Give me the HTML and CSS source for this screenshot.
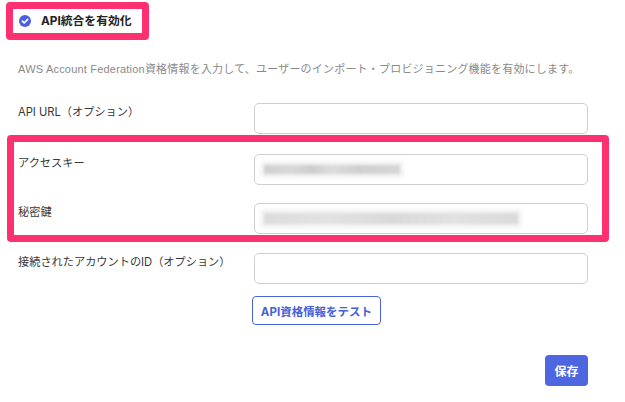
FILE: index.html
```html
<!DOCTYPE html>
<html lang="ja">
<head>
<meta charset="utf-8">
<link rel="stylesheet" href="styles.css">
</head>
<body>
<div class="page">
  <div class="enable">
    <svg class="check" width="12" height="12" viewBox="0 0 12 12"><circle cx="6" cy="6" r="6" fill="#4b5fe0"/><path d="M3.4 6.1 L5.2 7.9 L8.7 4.3" fill="none" stroke="#fff" stroke-width="1.7" stroke-linecap="round" stroke-linejoin="round"/></svg>
    <span class="enable-text">API統合を有効化</span>
  </div>
  <p class="desc">AWS Account Federation資格情報を入力して、ユーザーのインポート・プロビジョニング機能を有効にします。</p>

  <div class="row row-first">
    <div class="label">API URL（オプション）</div>
    <div class="field"></div>
  </div>

  <div class="highlight">
    <div class="row row-in">
      <div class="label">アクセスキー</div>
      <div class="field"><span class="mask mask-short"></span></div>
    </div>
    <div class="row row-in row-gap">
      <div class="label">秘密鍵</div>
      <div class="field"><span class="mask mask-long"></span></div>
    </div>
  </div>

  <div class="row row-account">
    <div class="label">接続されたアカウントのID（オプション）</div>
    <div class="field"></div>
  </div>

  <div class="test-wrap"><button class="btn-test">API資格情報をテスト</button></div>
  <div class="save-wrap"><button class="btn-save">保存</button></div>
</div>
</body>
</html>
```

FILE: styles.css
```css
html, body {
  margin: 0;
  padding: 0;
  background: #ffffff;
}
body {
  font-family: "Inter", "Noto Sans CJK JP", sans-serif;
  color: #333333;
}
.page {
  width: 625px;
  height: 402px;
  overflow: hidden;
}
.enable {
  margin: 2px 0 0 6px;
  width: 123px;
  height: 24px;
  border: 7px solid #fd3070;
  border-radius: 4px;
  display: flex;
  align-items: center;
  padding-left: 6px;
}
.check {
  flex: none;
  display: block;
}
.enable-text {
  margin-left: 10px;
  font-size: 11.8px;
  font-weight: 700;
  color: #222222;
  line-height: 16px;
}
.desc {
  margin: 21px 0 0 18px;
  font-family: "Liberation Sans", "Noto Sans CJK JP", sans-serif;
  font-size: 11px;
  letter-spacing: 0.2px;
  line-height: 16px;
  color: #8a8a8a;
  white-space: nowrap;
}
.row {
  display: flex;
  padding-left: 18px;
}
.row-first {
  margin-top: 26px;
}
.label {
  width: 236px;
  flex: none;
  font-size: 11.2px;
  line-height: 16px;
  padding-top: 1px;
  color: #383838;
  white-space: nowrap;
}
.field {
  width: 334px;
  height: 31px;
  box-sizing: border-box;
  border: 1px solid #cfcfcf;
  border-radius: 5px;
  background: #ffffff;
  display: flex;
  align-items: center;
  padding-left: 9px;
}
.highlight {
  margin: 1px 0 0 7px;
  width: 584px;
  border: 7px solid #fd3070;
  border-radius: 4px;
  padding: 12px 0 1px 4px;
}
.row-in {
  padding-left: 0;
}
.row-gap {
  margin-top: 18px;
}
.mask {
  display: block;
  height: 9px;
  background: linear-gradient(90deg, #d0d0d0 0%, #d8d8d8 20%, #cdcdcd 35%, #dcdcdc 50%, #d0d0d0 70%, #d6d6d6 100%);
  box-shadow: 0 0 4px 3px #eeeeee;
  filter: blur(1.4px);
}
.mask-short {
  width: 136px;
}
.mask-long {
  width: 254px;
  height: 11px;
  background: linear-gradient(90deg, #dcdcdc 0%, #e2e2e2 25%, #d9d9d9 50%, #e1e1e1 75%, #dadada 100%);
}
.row-account {
  margin-top: 11px;
}
.test-wrap {
  margin: 12px 0 0 252px;
}
.btn-test {
  display: block;
  width: 129px;
  height: 29px;
  padding: 0;
  border: 1px solid #4a63e0;
  border-radius: 4px;
  background: #ffffff;
  color: #4760d8;
  font-family: "Inter", "Noto Sans CJK JP", sans-serif;
  font-size: 11.5px;
  font-weight: 700;
}
.save-wrap {
  margin: 30px 0 0 545px;
}
.btn-save {
  display: block;
  width: 43px;
  height: 31px;
  padding: 0;
  border: none;
  border-radius: 4px;
  background: #4f66e1;
  color: #ffffff;
  font-family: "Inter", "Noto Sans CJK JP", sans-serif;
  font-size: 12px;
  font-weight: 700;
}
```
